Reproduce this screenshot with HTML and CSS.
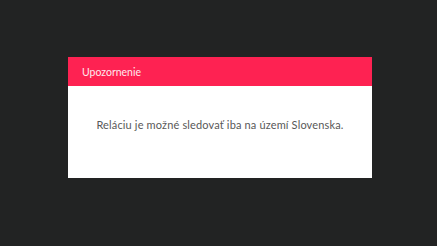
FILE: index.html
```html
<!DOCTYPE html>
<html lang="sk">
<head>
  <meta charset="UTF-8">
  <title>Upozornenie</title>
  <link rel="stylesheet" href="styles.css">
</head>
<body>

  <div class="dialog">
    <div class="dialog-head">Upozornenie</div>
    <div class="dialog-body">
      <p>Reláciu je možné sledovať iba na území Slovenska.</p>
    </div>
  </div>

</body>
</html>
```

FILE: styles.css
```css
html, body {
  height: 100%;
}
body {
  margin: 0;
  background-color: #222323;
  font-family: Lato, "Open Sans", sans-serif;
  display: flex;
  justify-content: center;
  align-items: flex-start;
  padding: 57px 0 0 3px;
  box-sizing: border-box;
}
.dialog {
  width: 304px;
  background-color: #fff;
}
.dialog-head {
  height: 29px;
  line-height: 30px;
  padding-left: 14px;
  background-color: #fe2252;
  color: #ffe9ee;
  font-size: 10.5px;
}
.dialog-body {
  height: 92px;
  text-align: center;
}
.dialog-body p {
  margin: 0;
  padding-top: 32px;
  font-size: 11px;
  line-height: 13px;
  letter-spacing: 0.15px;
  color: #585858;
}
```
